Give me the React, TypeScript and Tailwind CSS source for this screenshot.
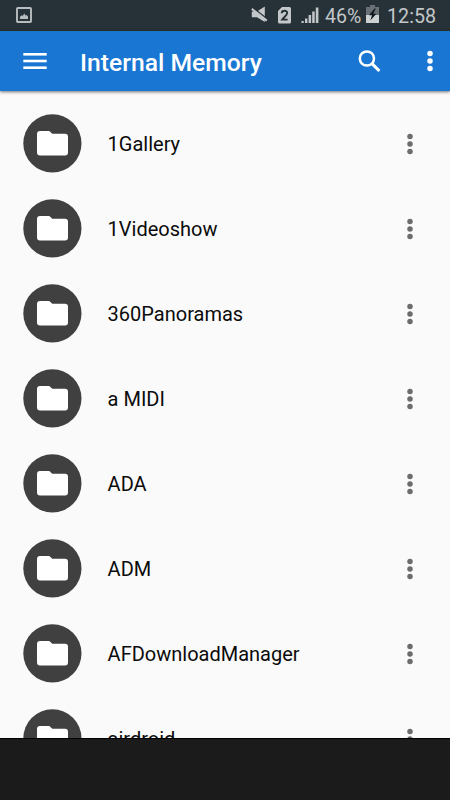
const FOLDERS = [
  '1Gallery',
  '1Videoshow',
  '360Panoramas',
  'a MIDI',
  'ADA',
  'ADM',
  'AFDownloadManager',
  'airdroid',
]

function ImageIcon() {
  return (
    <svg width="16" height="16" viewBox="0 0 16 16" fill="none" aria-hidden="true">
      <rect x="1" y="1" width="14" height="14" rx="0.8" stroke="#b9bdbf" strokeWidth="1.9" />
      <path d="M4 12V9.7L5.6 8.2 6.7 9 8.2 6.6 9.6 8.6 10.8 8 12 9.8V12Z" fill="#b9bdbf" />
    </svg>
  )
}

function MuteIcon() {
  return (
    <svg width="17" height="17" viewBox="0 0 17 17" fill="none" aria-hidden="true">
      <path d="M0.8 5.4H6L13.8 0.4V16L6 11.2H0.8Z" fill="#c3c7c9" />
      <path d="M2 1.9L16.4 13.2" stroke="#263238" strokeWidth="1.5" />
      <path d="M0.8 2.9L15.8 14.6" stroke="#c3c7c9" strokeWidth="2" />
    </svg>
  )
}

function SimIcon() {
  return (
    <svg width="13" height="17" viewBox="0 0 13 17" className="block" aria-hidden="true">
      <path d="M4 0H11.5Q13 0 13 1.5V15Q13 16.5 11.5 16.5H1.5Q0 16.5 0 15V4Z" fill="#c3c7c9" />
      <path
        d="M3.7 6.2C3.8 2.9 9.2 2.9 9.2 6.1C9.2 8.2 6 10.1 4.2 12.6H9.6"
        fill="none"
        stroke="#263238"
        strokeWidth="1.9"
      />
    </svg>
  )
}

function SignalIcon() {
  return (
    <svg width="18" height="17" viewBox="0 0 18 17" fill="#c3c7c9" className="block" aria-hidden="true">
      <rect x="0.5" y="14" width="2.2" height="2" />
      <rect x="4" y="11.5" width="2.4" height="4.5" />
      <rect x="7.6" y="8" width="2.5" height="8" />
      <rect x="11.2" y="4.5" width="2.5" height="11.5" />
      <rect x="14.8" y="0.5" width="2.6" height="15.5" />
    </svg>
  )
}

function BatteryIcon() {
  return (
    <svg width="13" height="18" viewBox="0 0 13 18" className="block" aria-hidden="true">
      <path d="M4 0H9V2H13V10H0V2H4Z" fill="#697176" />
      <path d="M0 10H13V18H0Z" fill="#ced1d2" />
      <path d="M8.6 3.5L3 10.2H6L4.3 15.6L10.4 8.7H7.2L9.8 3.5Z" fill="#10191d" />
    </svg>
  )
}

function MenuIcon() {
  return (
    <svg width="24" height="16" viewBox="0 0 24 16" fill="#fff" aria-hidden="true">
      <rect x="0.3" y="0" width="23.4" height="2.6" />
      <rect x="0.3" y="6.7" width="23.4" height="2.6" />
      <rect x="0.3" y="13.4" width="23.4" height="2.6" />
    </svg>
  )
}

function SearchIcon() {
  return (
    <svg width="23" height="23" viewBox="0 0 23 23" fill="none" stroke="#fff" aria-hidden="true">
      <circle cx="8.9" cy="8.5" r="7.1" strokeWidth="2.5" />
      <path d="M14 13.6L21.4 21" strokeWidth="3.1" />
    </svg>
  )
}

function DotsIcon({ className }: { className: string }) {
  return (
    <svg width="6" height="22" viewBox="0 0 6 22" fill="currentColor" className={className} aria-hidden="true">
      <circle cx="3" cy="3.4" r="2.75" />
      <circle cx="3" cy="10.9" r="2.75" />
      <circle cx="3" cy="18.4" r="2.75" />
    </svg>
  )
}

// Dark disc with the folder glyph inside it
function FolderBadge() {
  return (
    <svg width="60" height="61" viewBox="0 0 60 61" className="shrink-0" aria-hidden="true">
      <circle cx="30.4" cy="30.4" r="29.1" fill="#404040" />
      <path
        d="M18 18H27.3L30.3 20.7H43Q46 20.7 46 23.7V39.5Q46 42.5 43 42.5H18Q15 42.5 15 39.5V21Q15 18 18 18Z"
        fill="#fff"
      />
    </svg>
  )
}

function StatusBar() {
  return (
    <div className="flex h-[31px] shrink-0 items-center border-b border-[#2a3526] bg-[#263238] pl-4 pr-[13px] text-[#c3c7c9]">
      <ImageIcon />
      <div className="ml-auto flex items-center">
        <MuteIcon />
        <span className="ml-[10px] mt-px"><SimIcon /></span>
        <span className="ml-[10px] mt-px"><SignalIcon /></span>
        <span className="ml-[6px] mt-[3px] w-[37px] whitespace-nowrap text-[19.5px] leading-none">46%</span>
        <span className="ml-1 -mt-0.5"><BatteryIcon /></span>
        <span className="ml-2 mt-[3px] w-[50px] whitespace-nowrap text-[19.7px] leading-none">12:58</span>
      </div>
    </div>
  )
}

function Toolbar() {
  return (
    <header className="relative z-10 flex h-[60px] shrink-0 items-center bg-[#1976d2] pl-[23px] pr-[17px] shadow-[0_1px_3px_rgba(0,0,0,0.55)]">
      <button type="button" aria-label="Menu">
        <MenuIcon />
      </button>
      <h1 className="ml-[33px] mt-1 text-[24.7px] font-medium leading-none text-white">Internal Memory</h1>
      <button type="button" className="ml-auto" aria-label="Search">
        <SearchIcon />
      </button>
      <button type="button" className="ml-[46px]" aria-label="More options">
        <DotsIcon className="text-white" />
      </button>
    </header>
  )
}

function FolderRow({ name }: { name: string }) {
  return (
    <li className="flex h-[85px] items-center pl-[22px] pr-[37px]">
      <FolderBadge />
      <span className="ml-[25.6px] mt-px text-[20px] leading-none text-[#0b0b0b]">{name}</span>
      <button type="button" className="ml-auto" aria-label={`${name} options`}>
        <DotsIcon className="text-[#6c6c6c]" />
      </button>
    </li>
  )
}

export default function App() {
  return (
    <div className="flex h-[800px] w-[450px] flex-col overflow-hidden bg-[#1b1b1b] font-['Roboto',sans-serif]">
      <StatusBar />
      <Toolbar />
      <ul className="h-[647px] shrink-0 overflow-hidden bg-[#fafafa] pt-[10px]">
        {FOLDERS.map((name) => (
          <FolderRow key={name} name={name} />
        ))}
      </ul>
      <div className="grow border-t border-black" />
    </div>
  )
}
